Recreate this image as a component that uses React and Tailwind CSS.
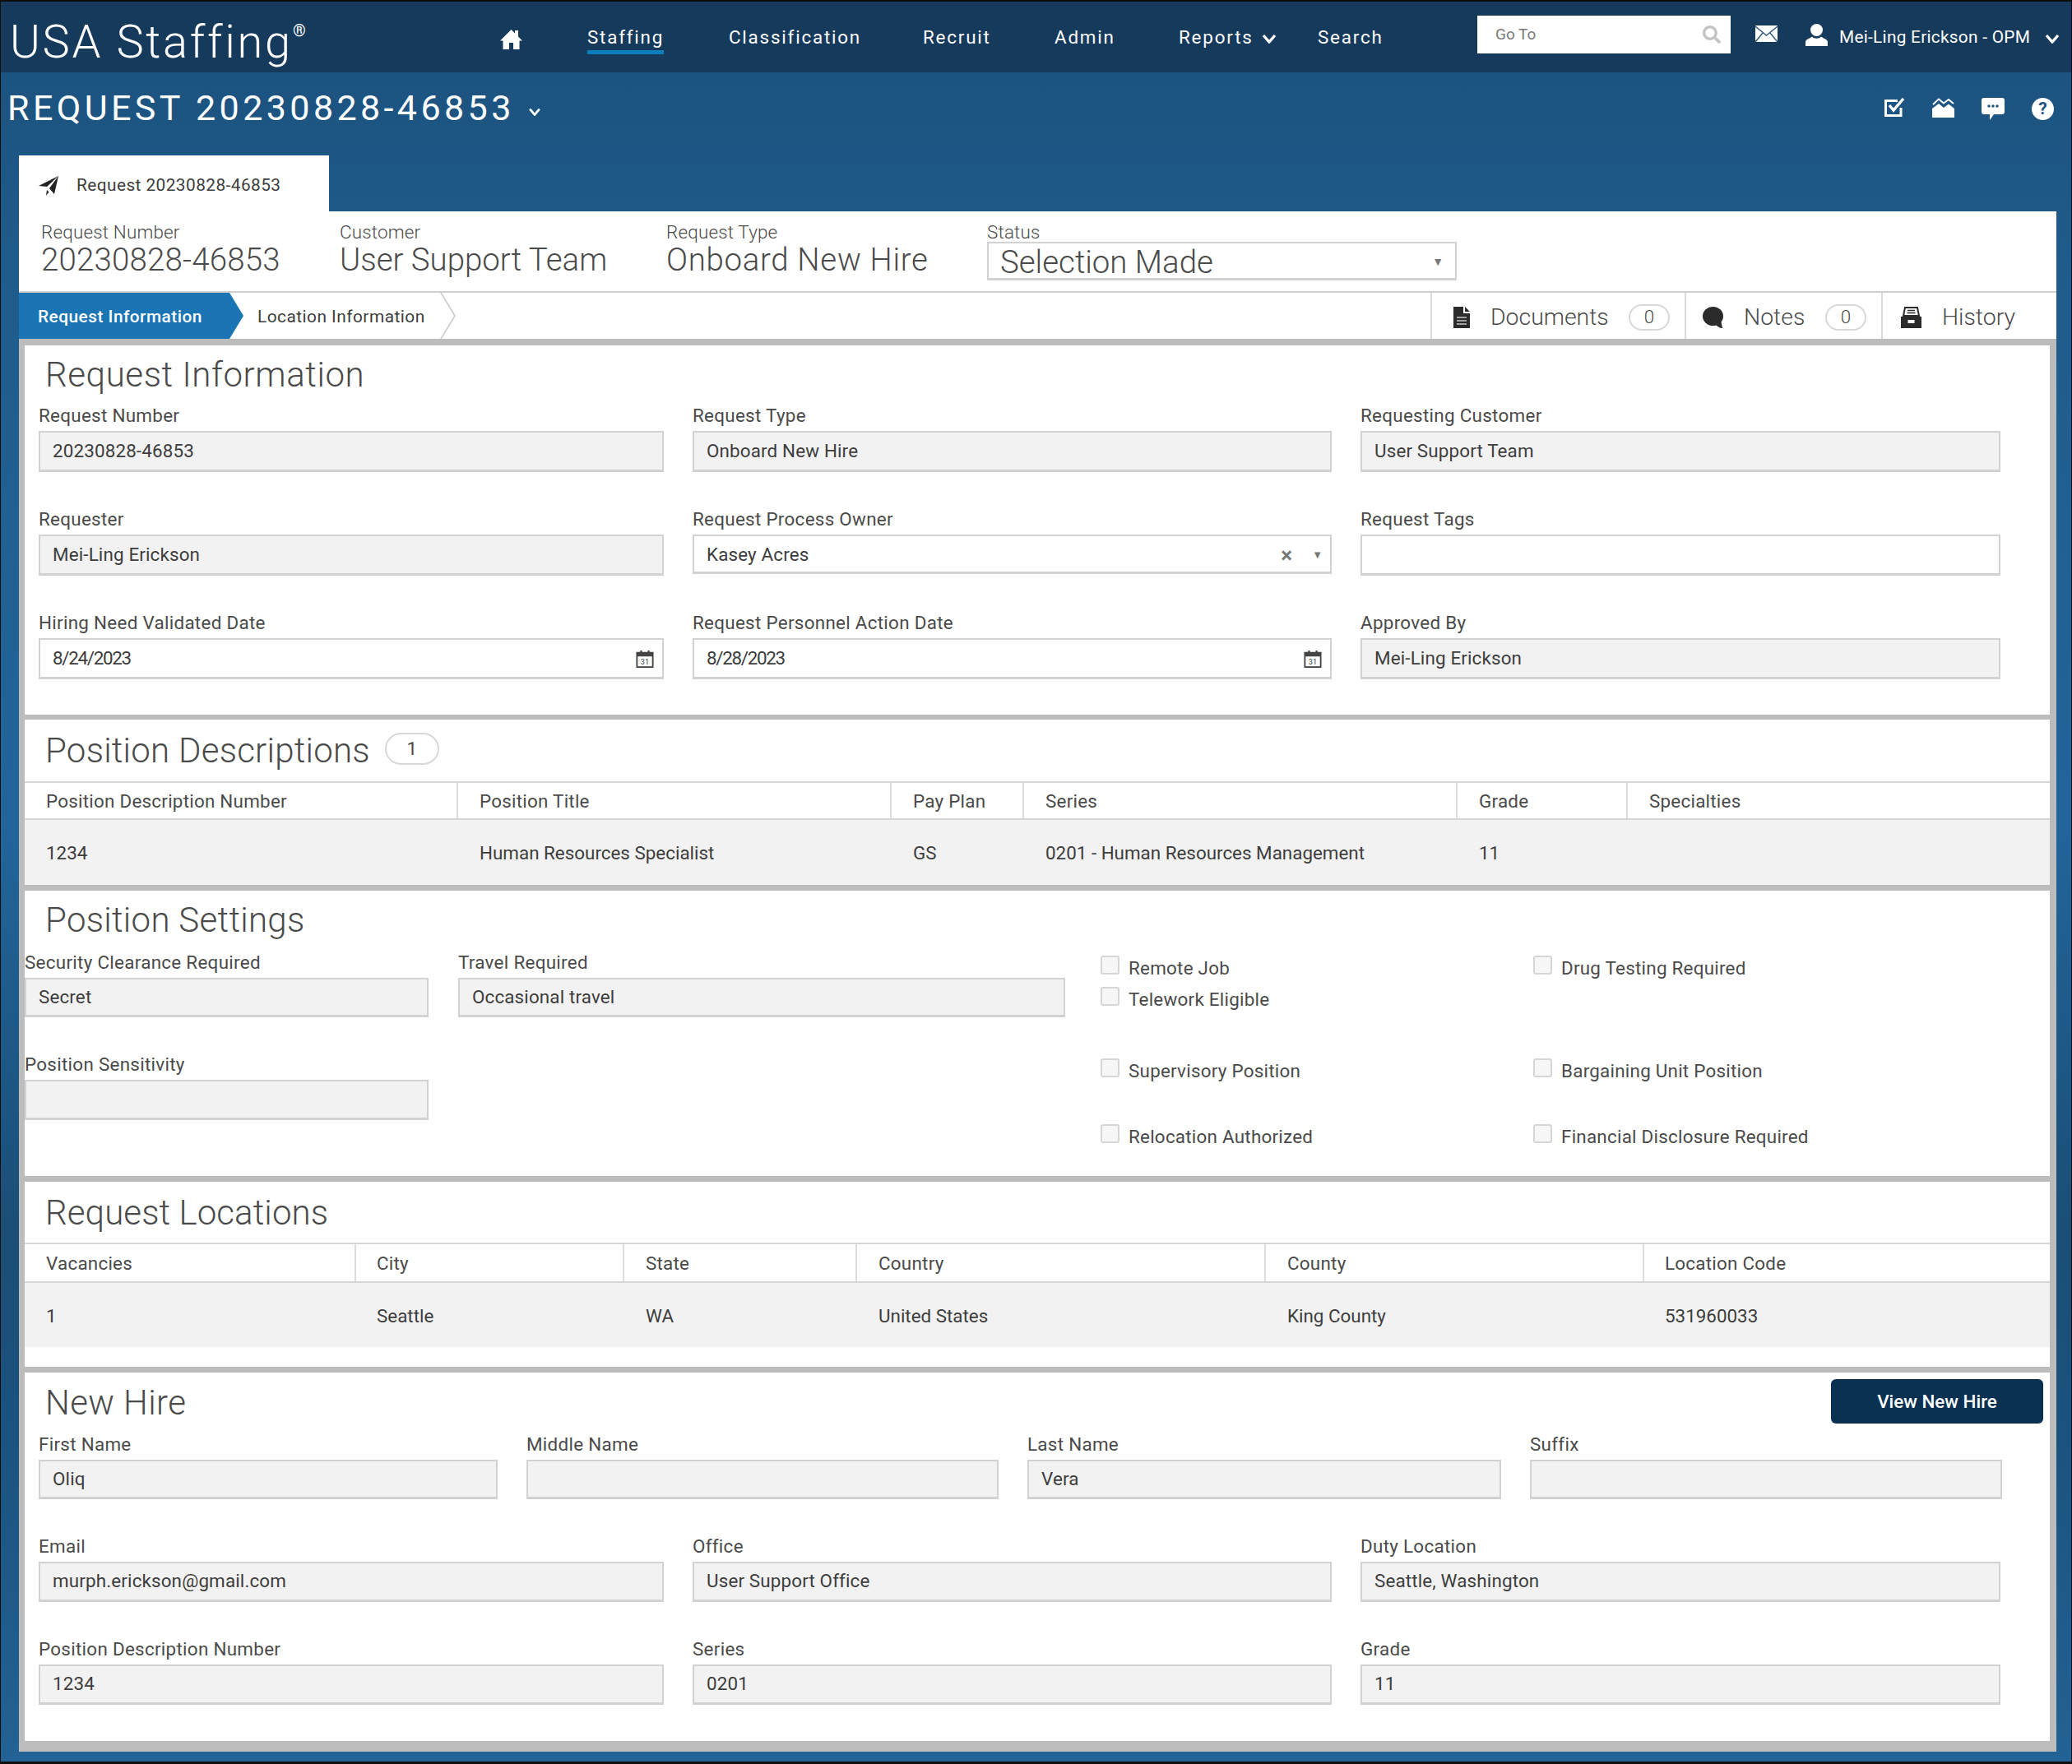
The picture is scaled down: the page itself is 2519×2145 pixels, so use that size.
import React from 'react';
import { FaSearch } from 'react-icons/fa';

const Chevron = ({ className }) => (
  <svg viewBox="0 0 18 12" className={className} fill="none" stroke="white" strokeWidth="3.4">
    <path d="M2 2 L9 10 L16 2" />
  </svg>
);

const HomeIcon = () => (
  <svg viewBox="0 0 27 24" className="w-[27px] h-[24px]" fill="white">
    <path d="M13.5 0 L18 4.5 V1 H22 V8.5 L27 13.5 H23.5 V24 H16 V16 H11 V24 H3.5 V13.5 H0 Z" />
  </svg>
);

const MailIcon = () => (
  <svg viewBox="0 0 27 20" className="w-[27px] h-[20px]">
    <rect width="27" height="20" fill="white" />
    <path d="M0 1 L13.5 12 L27 1 M0 20 L9.5 8.5 M27 20 L17.5 8.5" stroke="#3a5f80" strokeWidth="1.5" fill="none" />
  </svg>
);

const UserIcon = () => (
  <svg viewBox="0 0 27 27" className="w-[27px] h-[27px]" fill="white">
    <circle cx="13.5" cy="7.5" r="7.5" />
    <path d="M0 27 V22 C0 19 5 18 8 15.5 C10 18.5 17 18.5 19 15.5 C22 18 27 19 27 22 V27 Z" />
  </svg>
);

const TasksIcon = () => (
  <svg viewBox="0 0 25 23" className="w-[25px] h-[23px]" fill="none">
    <path d="M20 12 V21.5 H1.5 V3.5 H16" stroke="white" strokeWidth="3" />
    <path d="M6 9 L11 15 L23 1" stroke="white" strokeWidth="3.4" />
  </svg>
);

const InboxIcon = () => (
  <svg viewBox="0 0 27 24" className="w-[27px] h-[24px]">
    <path d="M1 8 L8 1.5 L14 6.5 L20 2 L26 7" fill="none" stroke="white" strokeWidth="2" />
    <path d="M0 13 L8 7 L14 12 L20 7.5 L27 13 V24 H0 Z" fill="white" />
  </svg>
);

const ChatIcon = () => (
  <svg viewBox="0 0 28 27" className="w-[28px] h-[27px]">
    <path d="M3 0 H25 Q28 0 28 3 V17 Q28 20 25 20 H15 L10 27 V20 H3 Q0 20 0 17 V3 Q0 0 3 0 Z" fill="white" />
    <circle cx="9" cy="10" r="1.7" fill="#1c5280" />
    <circle cx="14" cy="10" r="1.7" fill="#1c5280" />
    <circle cx="19" cy="10" r="1.7" fill="#1c5280" />
  </svg>
);

const PlaneIcon = () => (
  <svg viewBox="0 0 24 24" className="w-[24px] h-[24px]" fill="#222">
    <path d="M24 0 L0 12 L10 13 Z M24 0 L13 15 L19 22 Z M10 17 L12.5 19.5 L9 24 Z" />
  </svg>
);

const DocIcon = () => (
  <svg viewBox="0 0 20 26" className="w-[20px] h-[26px]">
    <path d="M0 0 H12 V8 H20 V26 H0 Z M14 0 L20 6 H14 Z" fill="#2b2b2b" />
    <path d="M4 13 H16 M4 17 H16 M4 21 H16" stroke="#c8c8c8" strokeWidth="1.6" />
  </svg>
);

const BubbleIcon = () => (
  <svg viewBox="0 0 25 26" className="w-[25px] h-[26px]" fill="#2b2b2b">
    <ellipse cx="12.5" cy="11.5" rx="12.5" ry="11.5" />
    <path d="M15 20 L22 16 L24 26 C21 26 17 24 15 20 Z" />
  </svg>
);

const ArchiveIcon = () => (
  <svg viewBox="0 0 25 26" className="w-[25px] h-[26px]">
    <path d="M5 1 H20 L22 11 H3 Z" fill="white" stroke="#2b2b2b" strokeWidth="2" />
    <path d="M8 4.5 H17 M7.5 7.5 H17.5" stroke="#2b2b2b" strokeWidth="1.4" />
    <path d="M0 12 H25 V26 H0 Z" fill="#2b2b2b" />
    <rect x="8.5" y="16" width="8" height="4" fill="white" />
  </svg>
);

const CalendarIcon = () => (
  <svg viewBox="0 0 24 24" className="w-[24px] h-[22px]">
    <rect x="1.5" y="4" width="21" height="19" fill="white" stroke="#444" strokeWidth="2" />
    <rect x="1.5" y="4" width="21" height="5" fill="#444" />
    <path d="M7 1 V5 M17 1 V5" stroke="#444" strokeWidth="2.4" />
    <text x="12" y="20" fontSize="10" textAnchor="middle" fill="#444" fontFamily="Roboto, sans-serif">31</text>
  </svg>
);

const Field = ({ label, value, disabled = true, height = 'h-[50px]', right, valueClass = 'tracking-[0.15px]' }) => (
  <div className="flex flex-col">
    <div className="h-[36px] leading-[34px] text-[22.4px] tracking-[0.3px] text-[#4a4a4a] whitespace-nowrap">{label}</div>
    <div
      className={`${height} flex items-center justify-between pl-[15px] border-2 border-b-[3px] border-[#d2d2d2] text-[22.4px] text-[#3d3d3d] ${disabled ? 'bg-[#f2f2f2]' : 'bg-white'}`}
    >
      <span className={valueClass}>{value}</span>
      {right}
    </div>
  </div>
);

const Check = ({ label, className = '' }) => (
  <div className={`flex items-start gap-[11px] ${className}`}>
    <div className="w-[23px] h-[23px] rounded-[3px] border-2 border-[#d6d6d6] bg-[#f6f6f6]"></div>
    <span className="mt-[3px] leading-[24px] text-[22.4px] tracking-[0.25px] text-[#4a4a4a] whitespace-nowrap">{label}</span>
  </div>
);

const Title = ({ children, className = '' }) => (
  <h2 className={`text-[42px] font-light leading-[72px] text-[#4a4a4a] whitespace-nowrap ${className}`}>{children}</h2>
);

const Badge = ({ children, className }) => (
  <span className={`flex items-center justify-center rounded-[16px] border-2 border-[#d8d8d8] bg-white text-[22.4px] text-[#4a4a4a] ${className}`}>
    {children}
  </span>
);

const Table = ({ cols, heads, cells, headH, rowH, pad }) => (
  <div className="text-[22.4px] text-[#4a4a4a]">
    <div className={`grid ${cols} ${headH} border-y-2 border-[#d6d6d6] tracking-[0.25px]`}>
      {heads.map((h, i) => (
        <div key={h} className={`flex items-center pt-[3px] ${pad[i]} ${i > 0 ? 'border-l-2 border-[#dcdcdc]' : ''}`}>{h}</div>
      ))}
    </div>
    <div className={`grid ${cols} ${rowH} bg-[#f2f2f2] text-[#3d3d3d]`}>
      {cells.map((c, i) => (
        <div key={i} className={`flex items-center pt-[3px] ${pad[i]} ${i > 0 ? 'border-l-2 border-transparent' : ''}`}>{c}</div>
      ))}
    </div>
  </div>
);

const padDesc = ['pl-[26px]', 'pl-[26px]', 'pl-[26px]', 'pl-[26px]', 'pl-[26px]', 'pl-[26px]'];
const padLoc = ['pl-[26px]', 'pl-[25px]', 'pl-[26px]', 'pl-[26px]', 'pl-[26px]', 'pl-[25px]'];
const dateText = 'tracking-[-1.3px]';

export default function App() {
  return (
    <div className="w-[2519px] h-[2145px] overflow-hidden bg-[#0e0e0e] pt-[2px] pb-[3px] px-px font-['Roboto',sans-serif]">
      <div className="flex h-full flex-col bg-[linear-gradient(180deg,#1b4f7b_0px,#1f5b8a_300px,#22659b_1000px,#1a4e76_1500px,#1b537f_1750px,#236294_2140px)]">
        {/* top nav */}
        <header className="flex h-[86px] shrink-0 items-start bg-[#163a5b] text-white">
          <div className="w-[607px] pl-[11px] pt-[16px] flex items-start">
            <span className="text-[56px] font-light leading-[66px] tracking-[2.7px]">USA Staffing</span>
            <span className="text-[20px] leading-[24px] mt-[7px]">®</span>
          </div>
          <div className="w-[106px] pt-[34px]"><HomeIcon /></div>
          <nav className="flex items-start text-[22.4px] tracking-[1.8px] leading-[26px]">
            <div className="w-[172px] pt-[30px]">
              <span className="inline-block h-[34px] border-b-[5px] border-[#0b7cbc]">Staffing</span>
            </div>
            <div className="w-[236px] pt-[30px]">Classification</div>
            <div className="w-[160px] pt-[30px]">Recruit</div>
            <div className="w-[151px] pt-[30px]">Admin</div>
            <div className="w-[169px] pt-[30px] flex items-center gap-[10px]">
              Reports
              <Chevron className="w-[18px] h-[12px] mt-[3px]" />
            </div>
            <div className="w-[194px] pt-[30px]">Search</div>
          </nav>
          <div className="mt-[17px] flex h-[46px] w-[308px] items-center justify-between bg-white pl-[22px] pr-[12px] text-[19px] text-[#7a7a7a]">
            Go To
            <FaSearch className="text-[22px] text-[#c4c4c4]" />
          </div>
          <div className="ml-[30px] mt-[29px]"><MailIcon /></div>
          <div className="ml-[34px] mt-[27px]"><UserIcon /></div>
          <div className="ml-[14px] mt-[30px] text-[20.8px] leading-[26px] tracking-[0.28px] whitespace-nowrap">Mei-Ling Erickson - OPM</div>
          <Chevron className="ml-[18px] mt-[39px] w-[18px] h-[12px]" />
        </header>

        {/* page title */}
        <div className="flex h-[101px] shrink-0 items-start text-white">
          <div className="pl-[8px] pt-[17px] text-[43px] leading-[52px] tracking-[4.4px] whitespace-nowrap">REQUEST 20230828-46853</div>
          <Chevron className="ml-[16px] mt-[43px] w-[16px] h-[10px]" />
          <div className="ml-auto mr-[21px] mt-[31px] flex items-start gap-[33px]">
            <TasksIcon />
            <InboxIcon />
            <ChatIcon />
            <span className="flex h-[27px] w-[27px] items-center justify-center rounded-full bg-white text-[21px] font-bold text-[#1c5280]">?</span>
          </div>
        </div>

        {/* tab */}
        <div className="ml-[22px] flex h-[68px] w-[377px] shrink-0 items-center gap-[22px] bg-white pl-[24px] pt-[5px] text-[20.8px] tracking-[0.45px] text-[#3d3d3d]">
          <PlaneIcon />
          Request 20230828-46853
        </div>

        <div className="ml-[22px] w-[2477px]">
          {/* request summary */}
          <div className="flex h-[99px] bg-white pl-[27px] pt-[12px] border-b-2 border-[#cfcfcf] text-[#4a4a4a]">
            <div className="w-[363px]">
              <div className="h-[24px] leading-[26px] text-[22.4px] font-light tracking-[0.2px]">Request Number</div>
              <div className="text-[38.4px] font-light leading-[46px] tracking-[0.2px]">20230828-46853</div>
            </div>
            <div className="w-[397px]">
              <div className="h-[24px] leading-[26px] text-[22.4px] font-light tracking-[0.2px]">Customer</div>
              <div className="text-[38.4px] font-light leading-[46px]">User Support Team</div>
            </div>
            <div className="w-[390px]">
              <div className="h-[24px] leading-[26px] text-[22.4px] font-light tracking-[0.2px]">Request Type</div>
              <div className="text-[38.4px] font-light leading-[46px] tracking-[0.7px]">Onboard New Hire</div>
            </div>
            <div className="w-[571px]">
              <div className="h-[25px] leading-[26px] text-[22.4px] font-light tracking-[0.2px]">Status</div>
              <div className="flex h-[47px] items-center justify-between pl-[14px] pr-[14px] pt-[3px] border-2 border-b-[3px] border-[#d2d2d2] text-[38.4px] font-light">
                Selection Made
                <span className="text-[14px] text-[#777]">▼</span>
              </div>
            </div>
          </div>

          {/* steps and side tabs */}
          <div className="flex h-[56px] bg-white text-[#4a4a4a]">
            <div className="flex w-[273px] items-center bg-[#1b75b4] pl-[23px] pt-[3px] text-[20.8px] font-medium tracking-[0.5px] text-white [clip-path:polygon(0_0,256px_0,273px_50%,256px_100%,0_100%)]">
              Request Information
            </div>
            <div className="ml-[17px] flex items-center pt-[3px] text-[20.8px] tracking-[0.5px] text-[#3d3d3d]">Location Information</div>
            <svg viewBox="0 0 19 56" className="ml-[18px] w-[19px] h-[56px]" fill="none" stroke="#d2d2d2" strokeWidth="2">
              <path d="M1 0 L18 28 L1 56" />
            </svg>
            <div className="ml-auto mr-[2px] flex text-[28.4px] font-light">
              <div className="flex w-[309px] items-center border-l-2 border-[#dadada] pl-[26px] pt-[4px]">
                <DocIcon />
                <span className="ml-[25px] w-[168px]">Documents</span>
                <Badge className="w-[50px] h-[32px]">0</Badge>
              </div>
              <div className="flex w-[239px] items-center border-l-2 border-[#dadada] pl-[20px] pt-[4px]">
                <BubbleIcon />
                <span className="ml-[25px] w-[99px]">Notes</span>
                <Badge className="w-[50px] h-[32px]">0</Badge>
              </div>
              <div className="flex w-[211px] items-center border-l-2 border-[#dadada] pl-[22px] pt-[4px]">
                <ArchiveIcon />
                <span className="ml-[25px]">History</span>
              </div>
            </div>
          </div>

          {/* cards */}
          <div className="flex flex-col bg-[#bcbcbc] pl-[7px] pr-[8px] pt-[8px] pb-[13px]">
            <section className="h-[449px] bg-white">
              <div className="h-[68px] pl-[25px]"><Title className="tracking-[0.6px]">Request Information</Title></div>
              <div className="ml-[17px] grid grid-cols-[760px_777px_778px] gap-x-[35px] gap-y-[40px]">
                <Field label="Request Number" value="20230828-46853" />
                <Field label="Request Type" value="Onboard New Hire" />
                <Field label="Requesting Customer" value="User Support Team" />
                <Field label="Requester" value="Mei-Ling Erickson" />
                <Field
                  label="Request Process Owner"
                  value="Kasey Acres"
                  disabled={false}
                  height="h-[48px] pt-[2px]"
                  right={
                    <span className="flex items-center gap-[24px] pr-[9px] text-[#777]">
                      <span className="text-[26px] leading-[26px] font-bold">×</span>
                      <span className="text-[13px]">▼</span>
                    </span>
                  }
                />
                <Field label="Request Tags" value="" disabled={false} />
                <Field label="Hiring Need Validated Date" value="8/24/2023" valueClass={dateText} disabled={false} right={<span className="pr-[9px]"><CalendarIcon /></span>} />
                <Field label="Request Personnel Action Date" value="8/28/2023" valueClass={dateText} disabled={false} right={<span className="pr-[9px]"><CalendarIcon /></span>} />
                <Field label="Approved By" value="Mei-Ling Erickson" />
              </div>
            </section>

            <section className="mt-[6px] h-[201px] bg-white">
              <div className="flex h-[75px] items-start pl-[25px]">
                <Title className="tracking-[0.25px] pt-[2px]">Position Descriptions</Title>
                <Badge className="ml-[18px] mt-[16px] w-[66px] h-[39px] rounded-[20px]">1</Badge>
              </div>
              <Table
                cols="grid-cols-[525px_527px_161px_527px_207px_1fr]"
                headH="h-[47px]"
                rowH="h-[79px]"
                pad={padDesc}
                heads={['Position Description Number', 'Position Title', 'Pay Plan', 'Series', 'Grade', 'Specialties']}
                cells={['1234', 'Human Resources Specialist', 'GS', '0201 - Human Resources Management', '11', '']}
              />
            </section>

            <section className="mt-[7px] h-[347px] bg-white">
              <div className="h-[70px] pl-[25px]"><Title className="tracking-[0.3px]">Position Settings</Title></div>
              <div className="flex">
                <div className="grid w-[1265px] grid-cols-[491px_738px] gap-x-[36px] gap-y-[40px] content-start">
                  <Field label="Security Clearance Required" value="Secret" height="h-[48px]" />
                  <Field label="Travel Required" value="Occasional travel" height="h-[48px]" />
                  <Field label="Position Sensitivity" value="" height="h-[49px]" />
                </div>
                <div className="ml-[43px] grid grid-cols-[526px_1fr]">
                  <div className="flex flex-col pt-[9px]">
                    <Check label="Remote Job" />
                    <Check label="Telework Eligible" className="mt-[11px]" />
                    <Check label="Supervisory Position" className="mt-[60px]" />
                    <Check label="Relocation Authorized" className="mt-[53px]" />
                  </div>
                  <div className="flex flex-col pt-[9px]">
                    <Check label="Drug Testing Required" />
                    <Check label="Bargaining Unit Position" className="mt-[98px]" />
                    <Check label="Financial Disclosure Required" className="mt-[53px]" />
                  </div>
                </div>
              </div>
            </section>

            <section className="mt-[7px] h-[225px] bg-white">
              <div className="h-[74px] pl-[25px]"><Title className="tracking-[0.1px] pt-[2px]">Request Locations</Title></div>
              <Table
                cols="grid-cols-[401px_326px_283px_497px_460px_1fr]"
                headH="h-[49px]"
                rowH="h-[78px]"
                pad={padLoc}
                heads={['Vacancies', 'City', 'State', 'Country', 'County', 'Location Code']}
                cells={['1', 'Seattle', 'WA', 'United States', 'King County', '531960033']}
              />
            </section>

            <section className="mt-[7px] h-[448px] bg-white">
              <div className="flex h-[70px] items-start justify-between pl-[25px] pr-[8px]">
                <Title className="tracking-[0.4px] pt-[1px]">New Hire</Title>
                <button className="mt-[8px] h-[54px] w-[258px] rounded-[6px] bg-[#0a3152] pt-[2px] text-[22.4px] font-medium text-white">View New Hire</button>
              </div>
              <div className="ml-[17px] grid grid-cols-[558px_574px_576px_574px] gap-x-[35px]">
                <Field label="First Name" value="Oliq" height="h-[48px]" />
                <Field label="Middle Name" value="" height="h-[48px]" />
                <Field label="Last Name" value="Vera" height="h-[48px]" />
                <Field label="Suffix" value="" height="h-[48px]" />
              </div>
              <div className="ml-[17px] mt-[40px] grid grid-cols-[760px_777px_778px] gap-x-[35px] gap-y-[40px]">
                <Field label="Email" value="murph.erickson@gmail.com" height="h-[49px]" />
                <Field label="Office" value="User Support Office" height="h-[49px]" />
                <Field label="Duty Location" value="Seattle, Washington" height="h-[49px]" />
                <Field label="Position Description Number" value="1234" height="h-[49px]" />
                <Field label="Series" value="0201" height="h-[49px]" />
                <Field label="Grade" value="11" height="h-[49px]" />
              </div>
            </section>
          </div>
        </div>
      </div>
    </div>
  );
}
